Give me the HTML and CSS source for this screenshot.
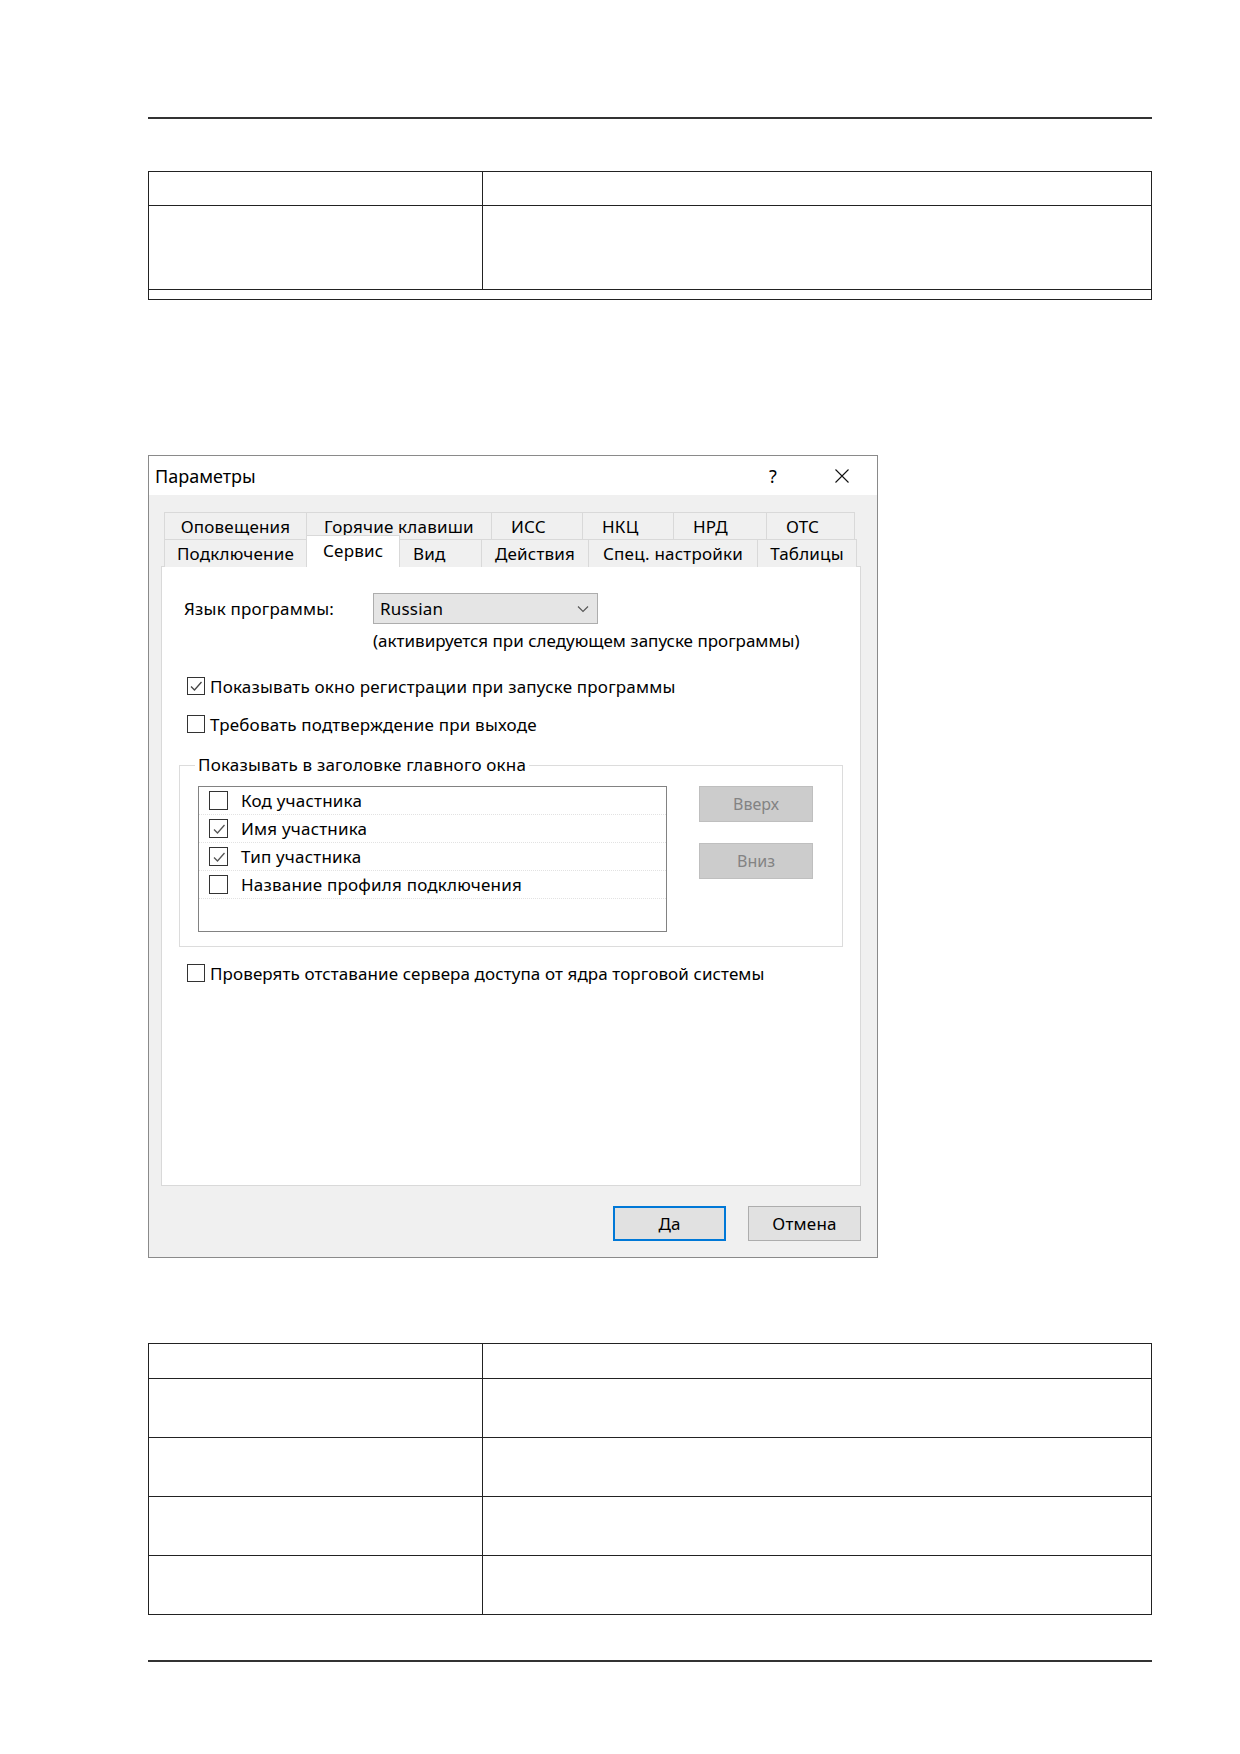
FILE: index.html
```html
<!DOCTYPE html>
<html lang="ru">

<head>
    <meta charset="UTF-8">
    <meta name="viewport" content="width=device-width, initial-scale=1.0">
    <title>Параметры</title>
    <link rel="stylesheet" href="styles.css">
</head>

<body>
    <div class="page">
        <div class="rule"></div>

        <table class="doc-table first">
            <tr class="head-row">
                <td class="col-name"></td>
                <td></td>
            </tr>
            <tr class="tall-row">
                <td class="col-name"></td>
                <td></td>
            </tr>
            <tr class="thin-row">
                <td colspan="2"></td>
            </tr>
        </table>

        <!-- Окно "Параметры", вкладка "Сервис" -->
        <div class="dialog">
            <div class="dialog-title">
                <span class="title-text">Параметры</span>
                <span class="title-btn help">?</span>
                <span class="title-btn close">
                    <svg width="16" height="16" viewBox="0 0 16 16">
                        <path d="M1.5 1.5 L14.5 14.5 M14.5 1.5 L1.5 14.5" stroke="#111" stroke-width="1.1" fill="none" />
                    </svg>
                </span>
            </div>

            <div class="dialog-body">
                <div class="tabs">
                    <div class="tab-row upper">
                        <div class="tab">Оповещения</div>
                        <div class="tab">Горячие клавиши</div>
                        <div class="tab narrow">ИСС</div>
                        <div class="tab narrow">НКЦ</div>
                        <div class="tab narrow">НРД</div>
                        <div class="tab narrow">ОТС</div>
                    </div>
                    <div class="tab-row lower">
                        <div class="tab">Подключение</div>
                        <div class="tab active">Сервис</div>
                        <div class="tab narrow short">Вид</div>
                        <div class="tab">Действия</div>
                        <div class="tab">Спец. настройки</div>
                        <div class="tab">Таблицы</div>
                    </div>
                </div>

                <div class="panel">
                    <div class="lang-row">
                        <span class="lang-label">Язык программы:</span>
                        <div class="combo">
                            <span>Russian</span>
                            <svg width="12" height="8" viewBox="0 0 12 8">
                                <path d="M1 1.5 L6 6.5 L11 1.5" stroke="#555" stroke-width="1.1" fill="none" />
                            </svg>
                        </div>
                    </div>
                    <div class="hint">(активируется при следующем запуске программы)</div>

                    <label class="check-row first-check">
                        <span class="box checked">
                            <svg width="16" height="16" viewBox="0 0 16 16">
                                <path d="M3 8.5 L6.5 12 L13.5 4" stroke="#444" stroke-width="1.3" fill="none" />
                            </svg>
                        </span>
                        Показывать окно регистрации при запуске программы
                    </label>
                    <label class="check-row second-check">
                        <span class="box"></span>
                        Требовать подтверждение при выходе
                    </label>

                    <fieldset class="group">
                        <legend>Показывать в заголовке главного окна</legend>
                        <div class="group-inner">
                            <div class="listbox">
                                <div class="list-item">
                                    <span class="box"></span>
                                    Код участника
                                </div>
                                <div class="list-item">
                                    <span class="box checked">
                                        <svg width="16" height="16" viewBox="0 0 16 16">
                                            <path d="M3 8.5 L6.5 12 L13.5 4" stroke="#555" stroke-width="1.3" fill="none" />
                                        </svg>
                                    </span>
                                    Имя участника
                                </div>
                                <div class="list-item">
                                    <span class="box checked">
                                        <svg width="16" height="16" viewBox="0 0 16 16">
                                            <path d="M3 8.5 L6.5 12 L13.5 4" stroke="#555" stroke-width="1.3" fill="none" />
                                        </svg>
                                    </span>
                                    Тип участника
                                </div>
                                <div class="list-item">
                                    <span class="box"></span>
                                    Название профиля подключения
                                </div>
                            </div>
                            <div class="move-buttons">
                                <button class="btn disabled" disabled>Вверх</button>
                                <button class="btn disabled" disabled>Вниз</button>
                            </div>
                        </div>
                    </fieldset>

                    <label class="check-row third-check">
                        <span class="box"></span>
                        Проверять отставание сервера доступа от ядра торговой системы
                    </label>
                </div>

                <div class="dialog-footer">
                    <button class="btn default">Да</button>
                    <button class="btn">Отмена</button>
                </div>
            </div>
        </div>

        <table class="doc-table second">
            <tr class="head-row">
                <td class="col-name"></td>
                <td></td>
            </tr>
            <tr class="body-row">
                <td class="col-name"></td>
                <td></td>
            </tr>
            <tr class="body-row">
                <td class="col-name"></td>
                <td></td>
            </tr>
            <tr class="body-row">
                <td class="col-name"></td>
                <td></td>
            </tr>
            <tr class="body-row">
                <td class="col-name"></td>
                <td></td>
            </tr>
        </table>

        <div class="rule bottom"></div>
    </div>
</body>

</html>
```

FILE: styles.css
```css
* {
    margin: 0;
    padding: 0;
    box-sizing: border-box;
}

body {
    background-color: #fff;
    font-family: "Noto Sans", "Open Sans", sans-serif;
    color: #000;
}

.page {
    width: 1240px;
    padding: 117px 88px 0 148px;
}

.rule {
    border-top: 2px solid #333;
}

.rule.bottom {
    margin-top: 45px;
}

/* Таблицы документа */
.doc-table {
    width: 1004px;
    border-collapse: collapse;
}

.doc-table td {
    border: 1px solid #222;
    padding: 0;
}

.doc-table .col-name {
    width: 334px;
}

.doc-table.first {
    margin-top: 52px;
}

.doc-table .head-row td {
    height: 34px;
}

.doc-table .tall-row td {
    height: 84px;
}

.doc-table .thin-row td {
    height: 10px;
}

.doc-table.second {
    margin-top: 85px;
}

.doc-table.second .head-row td {
    height: 35px;
}

.doc-table .body-row td {
    height: 59px;
}

/* Диалог */
.dialog {
    margin-top: 155px;
    width: 730px;
    height: 803px;
    border: 1px solid #8a8a8a;
    background-color: #f0f0f0;
    font-size: 17px;
    letter-spacing: 0.2px;
}

.dialog-title {
    height: 39px;
    background-color: #fff;
    display: flex;
    align-items: center;
    padding: 0 12px 0 6px;
}

.title-text {
    flex: 1;
    font-size: 18px;
    letter-spacing: 0;
}

.title-btn {
    width: 46px;
    display: flex;
    justify-content: center;
    align-items: center;
    font-size: 18px;
}

.title-btn.help {
    margin-right: 23px;
}

.dialog-body {
    padding: 17px 16px 0 12px;
}

.tabs {
    margin: 0 3px;
    height: 54px;
}

.tab-row {
    display: grid;
    height: 27px;
}

.tab-row.upper {
    grid-template-columns: 143px 185px 91px 91px 93px 88px;
}

.tab-row.lower {
    grid-template-columns: 143px 93px 82px 107px 169px 99px;
}

.tab {
    border: 1px solid #d9d9d9;
    border-bottom: none;
    margin-left: -1px;
    display: flex;
    justify-content: center;
    align-items: center;
    background-color: #f0f0f0;
    white-space: nowrap;
}

.tab:first-child {
    margin-left: 0;
}

.tab.narrow {
    justify-content: flex-start;
    padding-left: 19px;
}

.tab.narrow.short {
    padding-left: 13px;
}

.tab.active {
    background-color: #fff;
    margin-top: -4px;
    height: 32px;
    justify-content: flex-start;
    align-items: flex-start;
    padding: 3px 0 0 16px;
    position: relative;
    z-index: 2;
}

.panel {
    height: 620px;
    background-color: #fff;
    border: 1px solid #d9d9d9;
    padding-top: 26px;
}

.lang-row {
    display: flex;
    align-items: center;
    padding-left: 22px;
    height: 31px;
}

.lang-label {
    width: 189px;
}

.combo {
    width: 225px;
    height: 31px;
    border: 1px solid #adadad;
    background-color: #e5e5e5;
    display: flex;
    align-items: center;
    justify-content: space-between;
    padding: 0 8px 0 6px;
}

.hint {
    margin: 7px 0 0 211px;
    line-height: 20px;
    letter-spacing: 0;
}

.check-row {
    display: flex;
    align-items: center;
    height: 22px;
    padding-left: 25px;
    gap: 5px;
}

.box {
    width: 18px;
    height: 18px;
    border: 1px solid #333;
    background-color: #fff;
    display: flex;
    justify-content: center;
    align-items: center;
    flex-shrink: 0;
}

.first-check {
    margin-top: 24px;
}

.second-check {
    margin-top: 16px;
}

.third-check {
    margin-top: 15px;
    letter-spacing: 0.1px;
}

.group {
    margin: 20px 17px 0 17px;
    border: 1px solid #dcdcdc;
    padding: 0 0 14px 0;
}

.group legend {
    margin-left: 15px;
    padding: 0 3px;
    line-height: 20px;
}

.group-inner {
    display: flex;
    align-items: flex-start;
    margin-top: 11px;
    padding-left: 18px;
    gap: 32px;
}

.listbox {
    width: 469px;
    height: 146px;
    border: 1px solid #828282;
    background-color: #fff;
}

.list-item {
    height: 28px;
    display: flex;
    align-items: center;
    padding-left: 10px;
    gap: 13px;
    border-bottom: 1px dotted #e2e2e2;
}

.list-item .box {
    width: 19px;
    height: 19px;
}

.move-buttons {
    display: flex;
    flex-direction: column;
    gap: 21px;
}

.btn {
    font-family: "Noto Sans", "Open Sans", sans-serif;
    font-size: 17px;
    letter-spacing: 0.2px;
    width: 113px;
    height: 35px;
    background-color: #e1e1e1;
    border: 1px solid #adadad;
    color: #000;
}

.btn.disabled {
    width: 114px;
    height: 36px;
    font-size: 16px;
    letter-spacing: 0;
    background-color: #cccccc;
    border-color: #bfbfbf;
    color: #838383;
}

.btn.default {
    border: 2px solid #0078d7;
}

.dialog-footer {
    display: flex;
    justify-content: flex-end;
    gap: 22px;
    margin-top: 20px;
}
```
